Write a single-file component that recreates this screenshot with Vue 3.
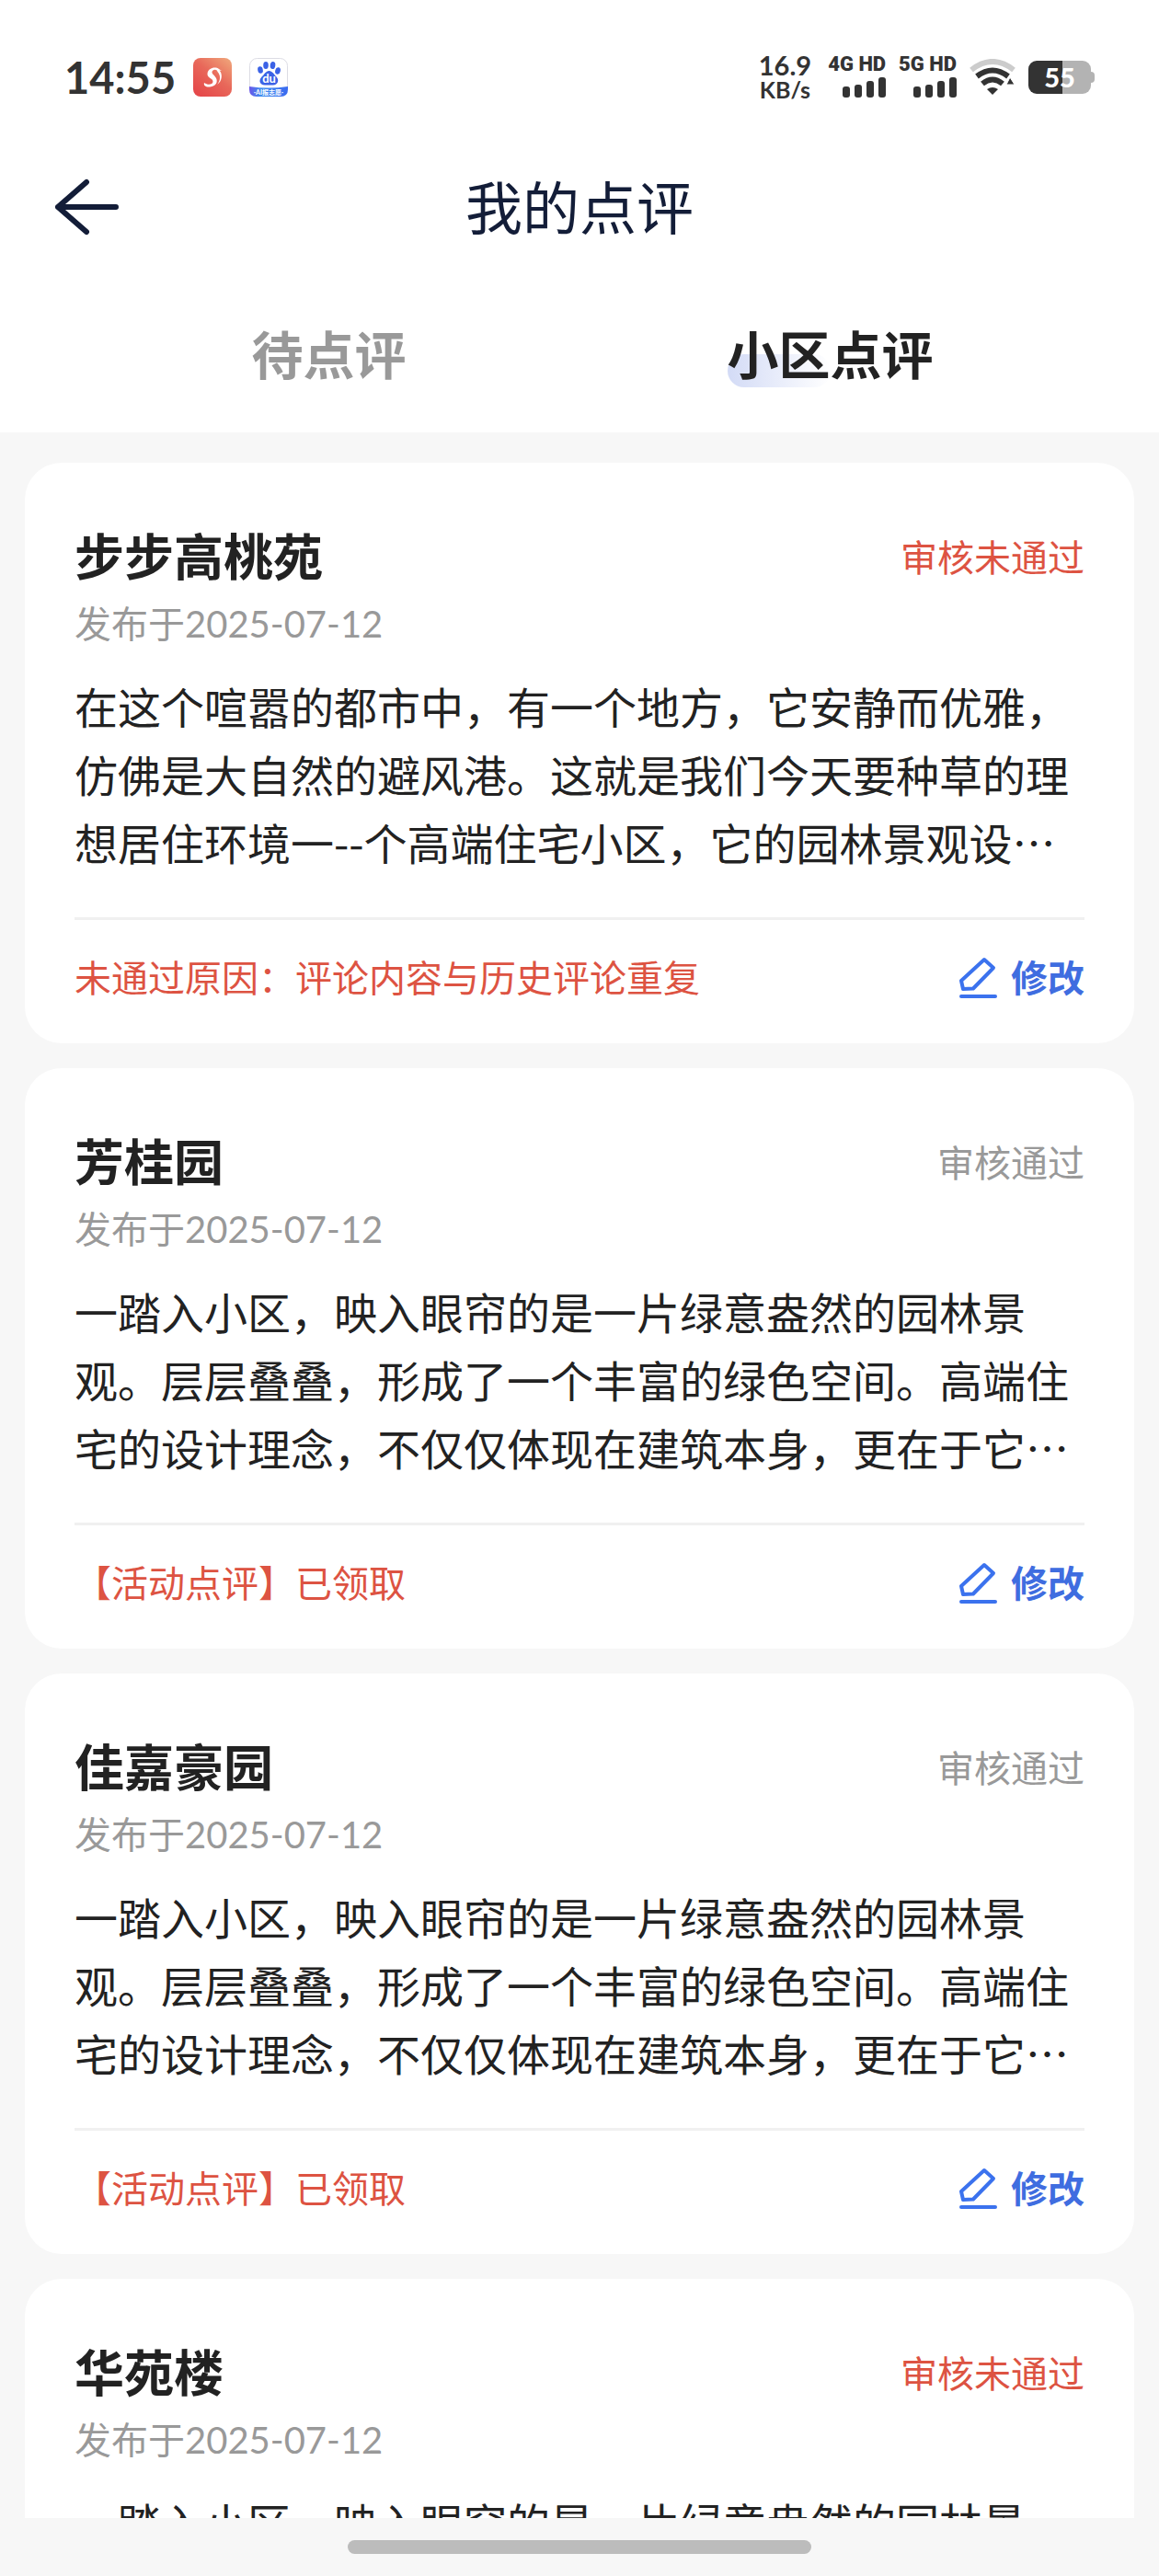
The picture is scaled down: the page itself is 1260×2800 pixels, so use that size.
<script setup>
import { ref } from "vue";

const tabs = ["待点评", "小区点评"];
const active = ref(1);

const garden =
  "一踏入小区，映入眼帘的是一片绿意盎然的园林景观。层层叠叠，形成了一个丰富的绿色空间。高端住宅的设计理念，不仅仅体现在建筑本身，更在于它…";

const reviews = [
  {
    name: "步步高桃苑",
    date: "2025-07-12",
    passed: false,
    text: "在这个喧嚣的都市中，有一个地方，它安静而优雅，仿佛是大自然的避风港。这就是我们今天要种草的理想居住环境一--个高端住宅小区，它的园林景观设…",
    note: "未通过原因：评论内容与历史评论重复",
  },
  { name: "芳桂园", date: "2025-07-12", passed: true, text: garden, note: "【活动点评】已领取" },
  { name: "佳嘉豪园", date: "2025-07-12", passed: true, text: garden, note: "【活动点评】已领取" },
  {
    name: "华苑楼",
    date: "2025-07-12",
    passed: false,
    text: garden,
    note: "未通过原因：评论内容与历史评论重复",
  },
];

const networks = ["4G HD", "5G HD"];
</script>

<template>
  <div class="page" lang="zh-CN">
    <div class="status">
      <div class="status-left">
        <span class="clock">14:55</span>
        <svg class="app-icon" viewBox="0 0 42 42">
          <defs>
            <linearGradient id="red" x1="1" y1="0" x2="0.2" y2="1">
              <stop offset="0" stop-color="#f0a97c" />
              <stop offset="0.5" stop-color="#e8685a" />
              <stop offset="1" stop-color="#e5484a" />
            </linearGradient>
          </defs>
          <rect width="42" height="42" rx="8" fill="url(#red)" />
          <path
            d="M28 12C24 9 16 11 15.500 17C15 22 22 22 21.500 26C21 29 16 30 12 27C11 30 14 32 18 31.500C25 31 27 26 25 22C23 18 19 17 21 14C23 12 26 12.500 26.500 15C30 19 30 24 26 29C32 25 32 17 28.500 13.500L31 14Z"
            fill="#fff"
          />
        </svg>
        <svg class="app-icon" viewBox="0 0 42 42">
          <defs>
            <linearGradient id="blue" x1="0" x2="1">
              <stop offset="0" stop-color="#6a55e8" />
              <stop offset="0.3" stop-color="#3f8ff0" />
              <stop offset="1" stop-color="#3a6af0" />
            </linearGradient>
          </defs>
          <rect x="0.500" y="0.500" width="41" height="41" rx="8" fill="#fff" stroke="#dcdce4" />
          <path d="M0 31Q21 34 42 31V34Q42 42 34 42H8Q0 42 0 34Z" fill="url(#blue)" />
          <g fill="#3b62e6">
            <ellipse cx="12" cy="13" rx="2.800" ry="3.800" transform="rotate(-12 12 13)" />
            <ellipse cx="18" cy="8" rx="2.800" ry="4" />
            <ellipse cx="25.500" cy="8" rx="2.800" ry="4" transform="rotate(8 25.500 8)" />
            <ellipse cx="31" cy="14" rx="2.800" ry="3.800" transform="rotate(15 31 14)" />
            <path d="M21.500 14C25 14 27 18 29.500 20.500C33 24 31 29.500 26 29.500H17C11 29.500 10 24 13.500 20.500C16.500 18 18 14 21.500 14Z" />
          </g>
          <text class="logo-du" x="21.500" y="27">du</text>
          <text class="logo-tag" x="21" y="40">·AI报志愿·</text>
        </svg>
      </div>

      <div class="status-right">
        <div class="speed">
          <span class="speed-num">16.9</span>
          <span class="speed-unit">KB/s</span>
        </div>
        <div v-for="n in networks" :key="n" class="network">
          <span>{{ n }}</span>
          <svg width="48" height="22" viewBox="0 0 48 22" fill="#333">
            <rect x="1" y="10" width="8" height="12" rx="3" />
            <rect x="14" y="8" width="8" height="14" rx="3" />
            <rect x="27" y="4" width="8" height="18" rx="3" />
            <rect x="40" y="0" width="8" height="22" rx="3" />
          </svg>
        </div>
        <svg class="wifi" width="50" height="40" viewBox="0 0 50 40" fill="none">
          <path d="M2 12Q25 -6 48 12" stroke="#ccc" stroke-width="6" />
          <path d="M8 19Q25 6 42 19" stroke="#333" stroke-width="6" />
          <path d="M14 27Q25 18 36 27" stroke="#333" stroke-width="6" />
          <path d="M19 33Q25 29 31 33L25 39Z" fill="#333" />
          <path d="M44 20L49 28H40Z" fill="#333" stroke="#fff" stroke-width="1" />
        </svg>
        <div class="battery">55</div>
      </div>
    </div>

    <header class="nav">
      <button class="back" aria-label="返回">
        <svg width="72" height="64" viewBox="0 0 72 64">
          <path
            d="M36 4L5 31L36 58M5 31H68"
            fill="none"
            stroke="#131d38"
            stroke-width="6"
            stroke-linecap="round"
            stroke-linejoin="round"
          />
        </svg>
      </button>
      <h1>我的点评</h1>
    </header>

    <nav class="tabs">
      <button
        v-for="(t, i) in tabs"
        :key="t"
        class="tab"
        :class="{ active: active === i }"
        @click="active = i"
      >
        <span>{{ t }}</span>
      </button>
    </nav>

    <main class="list">
      <article v-for="r in reviews" :key="r.name" class="card">
        <div class="card-head">
          <h2>{{ r.name }}</h2>
          <span class="state" :class="{ fail: !r.passed }">
            {{ r.passed ? "审核通过" : "审核未通过" }}
          </span>
        </div>
        <div class="date">发布于{{ r.date }}</div>
        <p class="text">{{ r.text }}</p>
        <div class="card-foot">
          <span class="note">{{ r.note }}</span>
          <button class="edit">
            <svg width="46" height="48" viewBox="0 0 46 48">
              <path
                d="M29 4L39 13L17 35.500L6 36L4 27Z"
                fill="none"
                stroke="#3b72ee"
                stroke-width="4"
                stroke-linejoin="round"
              />
              <path d="M4 44H41" stroke="#3b72ee" stroke-width="4" stroke-linecap="round" />
            </svg>
            修改
          </button>
        </div>
      </article>
    </main>

    <footer class="home">
      <div class="home-bar"></div>
    </footer>
  </div>
</template>

<style>
body {
  margin: 0;
}
</style>

<style scoped>
.page {
  display: flex;
  flex-direction: column;
  height: 100vh;
  background: #f7f7f7;
  color: #222;
  font-family: Lato, "Noto Sans CJK SC", sans-serif;
}

button {
  padding: 0;
  border: none;
  background: none;
  font-family: inherit;
  cursor: pointer;
}

svg {
  display: block;
  flex-shrink: 0;
}

/* 状态栏 */
.status {
  display: flex;
  align-items: center;
  justify-content: space-between;
  flex-shrink: 0;
  height: 168px;
  padding: 0 70px;
  background: #fff;
  color: #333;
}

.status-left,
.status-right {
  display: flex;
  align-items: center;
}

.status-left {
  gap: 19px;
}

.clock {
  font-size: 47px;
  font-weight: 700;
  line-height: 56px;
}

.app-icon {
  width: 42px;
  height: 42px;
}

.logo-du {
  fill: #fff;
  font-size: 13px;
  font-weight: 700;
  text-anchor: middle;
}

.logo-tag {
  fill: #fff;
  font-size: 7px;
  font-weight: 700;
  text-anchor: middle;
}

.status-right {
  gap: 14px;
}

.speed {
  display: flex;
  flex-direction: column;
  align-items: center;
  margin-right: 4px;
  font-weight: 700;
  line-height: 27px;
}

.speed-num {
  font-size: 29px;
}

.speed-unit {
  font-size: 25px;
}

.network {
  display: flex;
  flex-direction: column;
  align-items: flex-end;
  gap: 6px;
  font-family: Roboto, sans-serif;
  font-size: 22px;
  font-weight: 900;
  line-height: 16px;
}

.battery {
  position: relative;
  width: 68px;
  height: 36px;
  margin-right: 4px;
  border-radius: 9px;
  background: linear-gradient(to right, #333 55%, #b3b3b3 55%);
  color: #fff;
  font-size: 29px;
  font-weight: 900;
  line-height: 36px;
  text-align: center;
}

.battery::after {
  content: "";
  position: absolute;
  top: 12px;
  left: 68px;
  width: 4px;
  height: 12px;
  border-radius: 0 4px 4px 0;
  background: #b3b3b3;
}

/* 导航 */
.nav {
  display: grid;
  grid-template-columns: 72px 1fr 72px;
  align-items: center;
  flex-shrink: 0;
  height: 116px;
  padding: 0 58px;
  background: #fff;
}

h1 {
  margin: 0;
  color: #131d38;
  font-size: 62px;
  font-weight: 400;
  line-height: 80px;
  text-align: center;
}

.tabs {
  display: flex;
  flex-shrink: 0;
  padding: 64px 85px 46px;
  background: #fff;
}

.tab {
  flex: 1;
  color: #999;
  font-size: 56px;
  font-weight: 700;
  line-height: 76px;
}

.tab span {
  position: relative;
  z-index: 0;
}

.tab.active {
  color: #222;
}

.tab.active span::before {
  content: "";
  position: absolute;
  z-index: -1;
  left: 0;
  bottom: -2px;
  width: 112px;
  height: 36px;
  border-radius: 18px;
  background: linear-gradient(to right, #d3dbf6, #fff);
}

/* 列表 */
.list {
  display: flex;
  flex: 1;
  flex-direction: column;
  gap: 27px;
  min-height: 0;
  padding: 33px 27px 0;
  overflow-y: auto;
  scrollbar-width: none;
}

.card {
  flex-shrink: 0;
  padding: 71px 54px 43px;
  border-radius: 40px;
  background: #fff;
}

.card-head,
.card-foot {
  display: flex;
  align-items: center;
  justify-content: space-between;
}

h2 {
  margin: 0;
  font-size: 54px;
  font-weight: 700;
  line-height: 64px;
}

.state {
  color: #999;
  font-size: 40px;
  line-height: 56px;
}

.date {
  margin-top: 12px;
  color: #999;
  font-size: 40px;
  line-height: 56px;
}

.text {
  margin: 24px 0 45px;
  font-family: "Noto Sans CJK SC", sans-serif;
  font-size: 47px;
  line-height: 74px;
}

.card-foot {
  padding-top: 35px;
  border-top: 3px solid #f0f0f0;
}

.state.fail,
.note {
  color: #dd5342;
}

.note {
  font-size: 40px;
  line-height: 56px;
}

.edit {
  display: flex;
  align-items: center;
  gap: 12px;
  color: #3f6de0;
  font-size: 40px;
  font-weight: 700;
  line-height: 56px;
}

/* 底部手势条 */
.home {
  display: flex;
  align-items: center;
  justify-content: center;
  flex-shrink: 0;
  height: 63px;
}

.home-bar {
  width: 40%;
  height: 15px;
  border-radius: 8px;
  background: #bcbcbc;
}
</style>
